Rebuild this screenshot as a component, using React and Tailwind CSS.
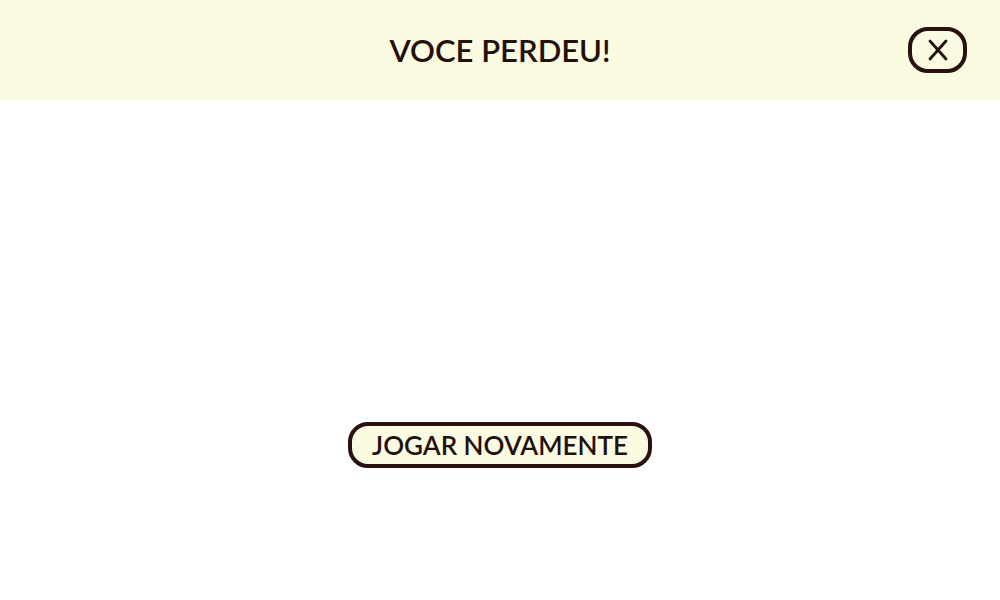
export default function App() {
  return (
    <div className="flex min-h-screen flex-col bg-white font-['Lato','Liberation_Sans',sans-serif] font-semibold text-[#230f0c]">
      <header className="grid h-[100px] grid-cols-[1fr_auto_1fr] items-center bg-[#fbfbe1] px-[33px]">
        <h1 className="col-start-2 text-[31px] leading-10">VOCE PERDEU!</h1>
        <button
          type="button"
          aria-label="Fechar"
          className="flex h-[46px] w-[59px] items-center justify-center justify-self-end rounded-[20px] border-4 border-[#2a1010] bg-[#fbfbe1]"
        >
          <svg viewBox="0 0 20 22" className="h-[22px] w-5" fill="none" stroke="currentColor" strokeWidth="2.8" strokeLinecap="round">
            <path d="M2 2 18 20M18 2 2 20" />
          </svg>
        </button>
      </header>
      <main className="flex flex-1 flex-col items-center justify-end pb-[132px]">
        <button
          type="button"
          className="h-[46px] rounded-[20px] border-4 border-[#2a1010] bg-[#fbfbe1] px-5 text-[26px] leading-8"
        >
          JOGAR NOVAMENTE
        </button>
      </main>
    </div>
  );
}
